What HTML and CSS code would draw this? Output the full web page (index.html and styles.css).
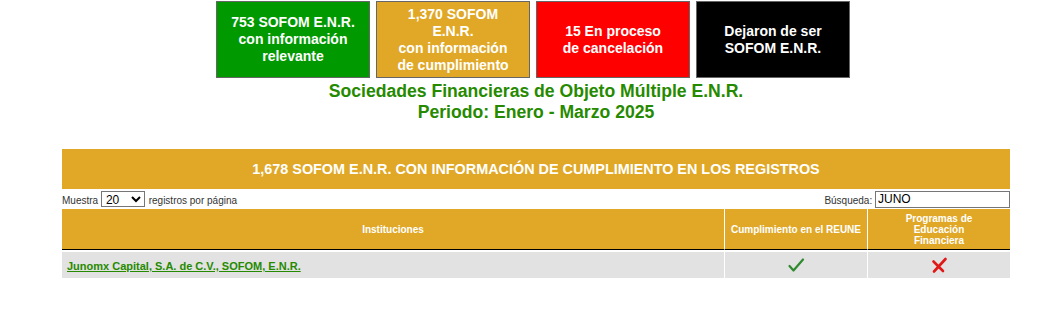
FILE: index.html
```html
<!DOCTYPE html>
<html lang="es">
<head>
    <meta charset="UTF-8">
    <meta name="viewport" content="width=device-width, initial-scale=1.0">
    <title>SOFOM E.N.R.</title>
    <link rel="stylesheet" href="styles.css">
</head>
<body>
    <div class="page">
        <div class="boxes">
            <div class="box box-green"><div>753 SOFOM E.N.R. con información relevante</div></div>
            <div class="box box-gold"><div>1,370 SOFOM E.N.R.<br>con información<br>de cumplimiento</div></div>
            <div class="box box-red"><div>15 En proceso<br>de cancelación</div></div>
            <div class="box box-black"><div>Dejaron de ser SOFOM E.N.R.</div></div>
        </div>

        <div class="title">
            <h1>Sociedades Financieras de Objeto Múltiple E.N.R.</h1>
            <h2>Periodo: Enero - Marzo 2025</h2>
        </div>

        <div class="banner">1,678 SOFOM E.N.R. CON INFORMACIÓN DE CUMPLIMIENTO EN LOS REGISTROS</div>

        <div class="controls">
            <label class="length">Muestra
                <select>
                    <option>10</option>
                    <option selected>20</option>
                    <option>50</option>
                </select>
                registros por página</label>
            <label class="search">Búsqueda: <input type="text" value="JUNO"></label>
        </div>

        <table class="results">
            <thead>
                <tr>
                    <th class="col-name">Instituciones</th>
                    <th class="col-flag">Cumplimiento en el REUNE</th>
                    <th class="col-flag">Programas de<br>Educación<br>Financiera</th>
                </tr>
            </thead>
            <tbody>
                <tr>
                    <td class="name"><a href="#">Junomx Capital, S.A. de C.V., SOFOM, E.N.R.</a></td>
                    <td class="flag">
                        <svg width="18" height="18" viewBox="0 0 18 18">
                            <path d="M2.5 10 L6.5 14.5 L16 3.5" fill="none" stroke="#2f8a2f" stroke-width="2.2" stroke-linecap="round" stroke-linejoin="round"/>
                        </svg>
                    </td>
                    <td class="flag">
                        <svg width="18" height="18" viewBox="0 0 18 18">
                            <path d="M3.5 5.5 L13 15 M15.5 3 L4 15.5" fill="none" stroke="#e01818" stroke-width="2.6" stroke-linecap="round"/>
                        </svg>
                    </td>
                </tr>
            </tbody>
        </table>
    </div>
</body>
</html>
```

FILE: styles.css
```css
body {
    margin: 0;
    padding: 1px 0 0;
    font-family: "Liberation Sans", Arial, sans-serif;
    background-color: #fff;
    color: #333;
}

.page {
    width: 948px;
    margin-left: 62px;
}

.boxes {
    display: flex;
    justify-content: center;
    gap: 6px;
    padding-right: 6px;
}

.box {
    width: 154px;
    height: 77px;
    box-sizing: border-box;
    border: 1px solid #666;
    padding: 0 9px;
    display: flex;
    align-items: center;
    justify-content: center;
    text-align: center;
    color: #fff;
    font-weight: bold;
    font-size: 14px;
    line-height: 17px;
}

.box-green { background-color: #009900; }
.box-gold { background-color: #e0a826; }
.box-red { background-color: #ff0000; }
.box-black { background-color: #000; }

.title {
    text-align: center;
    color: #268a00;
    margin-top: 3px;
}

.title h1,
.title h2 {
    margin: 0;
    font-size: 17.6px;
    line-height: 21px;
}

.banner {
    margin-top: 26px;
    height: 40px;
    line-height: 40px;
    background-color: #e0a826;
    color: #fff;
    text-align: center;
    font-weight: bold;
    font-size: 14.4px;
}

.controls {
    display: flex;
    justify-content: space-between;
    align-items: center;
    height: 20px;
    font-size: 10px;
    color: #333;
}

.controls select {
    width: 44px;
    height: 16px;
    font-size: 12px;
    padding: 0;
    margin: 0 1px 0 0;
    border: 1px solid #767676;
    background-color: #fff;
    font-family: "Liberation Sans", Arial, sans-serif;
}

.controls input {
    width: 135px;
    height: 17px;
    box-sizing: border-box;
    border: 1px solid #767676;
    padding: 0 2px;
    font-size: 12px;
    font-family: "Liberation Sans", Arial, sans-serif;
    color: #000;
}

.results {
    width: 100%;
    border-collapse: separate;
    border-spacing: 0;
}

.results th {
    background-color: #e0a826;
    color: #fff;
    font-size: 10px;
    font-weight: bold;
    line-height: 11px;
    height: 41px;
    padding: 0 3px;
    box-sizing: border-box;
    border-bottom: 1px solid #000;
    text-align: center;
}

.results th + th {
    border-left: 1px solid #fff;
}

.results .col-flag {
    width: 143px;
}

.results td {
    background-color: #e1e2e1;
    height: 28px;
    box-sizing: border-box;
    border-top: 2px solid #fff;
    padding: 0 5px;
    vertical-align: middle;
}

.results td + td {
    border-left: 1px solid #fff;
}

.results td.name a {
    color: #268a00;
    font-weight: bold;
    font-size: 11px;
}

.results td.flag {
    text-align: center;
    line-height: 0;
}
```
